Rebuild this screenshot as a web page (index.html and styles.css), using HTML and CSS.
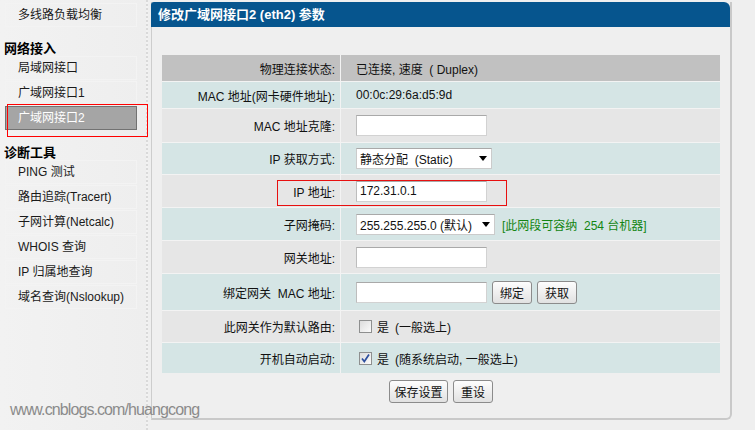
FILE: index.html
```html
<!DOCTYPE html>
<html lang="zh-CN">
<head>
    <meta charset="UTF-8">
    <title>修改广域网接口2 (eth2) 参数</title>
    <link rel="stylesheet" href="styles.css">
</head>
<body>
<div class="page">
    <div class="sidebar">
        <a class="item">多线路负载均衡</a>
        <h4 class="group">网络接入</h4>
        <a class="item">局域网接口</a>
        <a class="item">广域网接口1</a>
        <div class="current">
            <a class="item active">广域网接口2</a>
        </div>
        <h4 class="group tools">诊断工具</h4>
        <a class="item">PING 测试</a>
        <a class="item">路由追踪(Tracert)</a>
        <a class="item">子网计算(Netcalc)</a>
        <a class="item">WHOIS 查询</a>
        <a class="item">IP 归属地查询</a>
        <a class="item">域名查询(Nslookup)</a>
    </div>

    <div class="main">
        <div class="panel">
            <div class="panel-title">修改广域网接口2 (eth2) 参数</div>
            <div class="panel-body">
                <table class="form-table">
                    <tr class="head short">
                        <td class="label">物理连接状态:</td>
                        <td class="value">已连接, 速度 &nbsp;( Duplex)</td>
                    </tr>
                    <tr class="blue short">
                        <td class="label">MAC 地址(网卡硬件地址):</td>
                        <td class="value">00:0c:29:6a:d5:9d</td>
                    </tr>
                    <tr class="gray tall">
                        <td class="label">MAC 地址克隆:</td>
                        <td class="value"><input type="text" class="txt"></td>
                    </tr>
                    <tr class="blue mid">
                        <td class="label">IP 获取方式:</td>
                        <td class="value">
                            <div class="select"><span>静态分配 &nbsp;(Static)</span><span class="arrow"></span></div>
                        </td>
                    </tr>
                    <tr class="gray">
                        <td class="label">IP 地址:</td>
                        <td class="value"><input type="text" class="txt" value="172.31.0.1"></td>
                    </tr>
                    <tr class="blue">
                        <td class="label">子网掩码:</td>
                        <td class="value">
                            <div class="field">
                                <div class="select wide"><span>255.255.255.0 (默认)</span><span class="arrow"></span></div>
                                <span class="hint">[此网段可容纳 &nbsp;254 台机器]</span>
                            </div>
                        </td>
                    </tr>
                    <tr class="gray">
                        <td class="label">网关地址:</td>
                        <td class="value"><input type="text" class="txt"></td>
                    </tr>
                    <tr class="blue bind">
                        <td class="label">绑定网关 &nbsp;MAC 地址:</td>
                        <td class="value">
                            <div class="field">
                                <input type="text" class="txt">
                                <button class="btn">绑定</button>
                                <button class="btn">获取</button>
                            </div>
                        </td>
                    </tr>
                    <tr class="gray mid">
                        <td class="label">此网关作为默认路由:</td>
                        <td class="value">
                            <div class="field check">
                                <span class="cb"></span>
                                <span>是</span><span class="note">(一般选上)</span>
                            </div>
                        </td>
                    </tr>
                    <tr class="blue last">
                        <td class="label">开机自动启动:</td>
                        <td class="value">
                            <div class="field check">
                                <span class="cb">
                                    <svg width="11" height="11" viewBox="0 0 11 11"><path d="M2 5.5 L4.3 8.5 L9 1.5" fill="none" stroke="#2d4f9e" stroke-width="1.7"/></svg>
                                </span>
                                <span>是</span><span class="note">(随系统启动, 一般选上)</span>
                            </div>
                        </td>
                    </tr>
                </table>
                <div class="actions">
                    <button class="btn save">保存设置</button>
                    <button class="btn">重设</button>
                </div>
            </div>
        </div>
    </div>
</div>

<div class="mark mark-ip"></div>
<div class="watermark">www.cnblogs.com/huangcong</div>
</body>
</html>
```

FILE: styles.css
```css
body {
    margin: 0;
    background: #efefef;
    font-family: "Liberation Sans", "Noto Sans CJK SC", sans-serif;
    font-size: 12px;
    color: #111;
}

.page {
    display: flex;
    align-items: flex-start;
}

/* left menu */
.sidebar {
    position: relative;
    width: 146px;
    height: 427px;
    padding-top: 3px;
    border-right: 2px dotted #d9d9d9;
    background: linear-gradient(90deg, #f2f2f2, #eeeeee);
}
.item {
    display: block;
    box-sizing: border-box;
    width: 132px;
    height: 24px;
    line-height: 22px;
    margin: 0 0 1px 5px;
    padding-left: 12px;
    border: 1px solid #f3f3f3;
    color: #1a1a1a;
    white-space: nowrap;
}
.item.active {
    background: #a5a5a5;
    border-color: #727272;
    color: #fff;
}
/* red annotation round the current menu entry */
.current {
    position: relative;
}
.current::after {
    content: "";
    position: absolute;
    left: 7px;
    top: -2px;
    width: 141px;
    height: 33px;
    box-sizing: border-box;
    border: 1px solid red;
}
.group {
    margin: 14px 0 -1px 4px;
    height: 16px;
    line-height: 16px;
    font-size: 13px;
    font-weight: bold;
    color: #000;
}
.group.tools {
    margin-top: 15px;
}

/* main panel */
.main {
    margin-left: 3px;
    padding-top: 2px;
}
.panel {
    width: 578px;
    border-left: 1px solid #cdcdcd;
    border-right: 2px solid #c9c9c9;
    border-bottom: 2px solid #c9c9c9;
    border-bottom-right-radius: 6px;
}
.panel-title {
    margin-left: -1px;
    height: 25px;
    line-height: 25px;
    padding-left: 7px;
    background: #06558e;
    border-radius: 3px 6px 0 0;
    color: #fff;
    font-size: 13px;
    font-weight: bold;
}
.panel-body {
    padding: 28px 10px 15px;
}

.form-table {
    width: 100%;
    border-collapse: separate;
    border-spacing: 0;
}
.form-table tr {
    height: 33px;
}
.form-table tr.short { height: 27px; }
.form-table tr.tall { height: 34px; }
.form-table tr.mid { height: 32px; }
.form-table tr.bind { height: 37px; }
.form-table tr.last { height: 30px; }

.form-table td {
    padding: 0;
    border-bottom: 1px solid #f3f3f3;
    vertical-align: middle;
    white-space: nowrap;
}
.form-table tr.last td {
    border-bottom: none;
}
.head td { background: #c1c1c1; }
.blue td { background: #d5e5e5; }
.gray td { background: #e6e6e6; }

.label {
    width: 173px;
    padding-right: 5px !important;
    border-right: 1px solid #f3f3f3;
    text-align: right;
}
.value {
    padding-left: 15px !important;
}

.field {
    display: flex;
    align-items: center;
    gap: 5px;
}

.txt {
    box-sizing: border-box;
    width: 131px;
    height: 21px;
    margin: 0;
    padding: 0 3px;
    border: 1px solid #d2d2d2;
    border-top-color: #a9a9a9;
    border-left-color: #bdbdbd;
    background: #fff;
    font: inherit;
    color: #111;
    vertical-align: middle;
}

.select {
    display: inline-flex;
    align-items: center;
    justify-content: space-between;
    box-sizing: border-box;
    width: 136px;
    height: 21px;
    padding: 0 4px 0 3px;
    border: 1px solid #cbcbcb;
    border-top-color: #a9a9a9;
    background: #fff;
    vertical-align: middle;
}
.select.wide {
    width: 139px;
}
.arrow {
    width: 0;
    height: 0;
    border-left: 4px solid transparent;
    border-right: 4px solid transparent;
    border-top: 5px solid #000;
}
.hint {
    margin-left: 2px;
    color: #138513;
}

.btn {
    box-sizing: border-box;
    width: 40px;
    height: 23px;
    margin: 0;
    padding: 0;
    border: 1px solid #8b8b8b;
    border-radius: 3px;
    background: linear-gradient(#fdfdfd, #e1e1e1);
    font: inherit;
    color: #111;
}
.btn.save {
    width: 59px;
}

.check {
    gap: 0;
}
.cb {
    display: flex;
    align-items: center;
    justify-content: center;
    box-sizing: border-box;
    width: 13px;
    height: 13px;
    margin: 0 5px 0 3px;
    border: 1px solid #8e8f8f;
    background: linear-gradient(135deg, #dcdcdc, #fbfbfb);
}
.note {
    margin-left: 6px;
}

.actions {
    display: flex;
    justify-content: center;
    gap: 5px;
    padding-top: 7px;
}

/* annotation box drawn over the IP row */
.mark {
    position: absolute;
    box-sizing: border-box;
    border: 1px solid #e81010;
}
.mark-ip {
    left: 277px;
    top: 180px;
    width: 230px;
    height: 26px;
}

.watermark {
    position: absolute;
    left: 10px;
    top: 401px;
    font-family: "Liberation Sans", sans-serif;
    font-size: 16px;
    letter-spacing: -0.9px;
    color: #8b8b8b;
}
```
